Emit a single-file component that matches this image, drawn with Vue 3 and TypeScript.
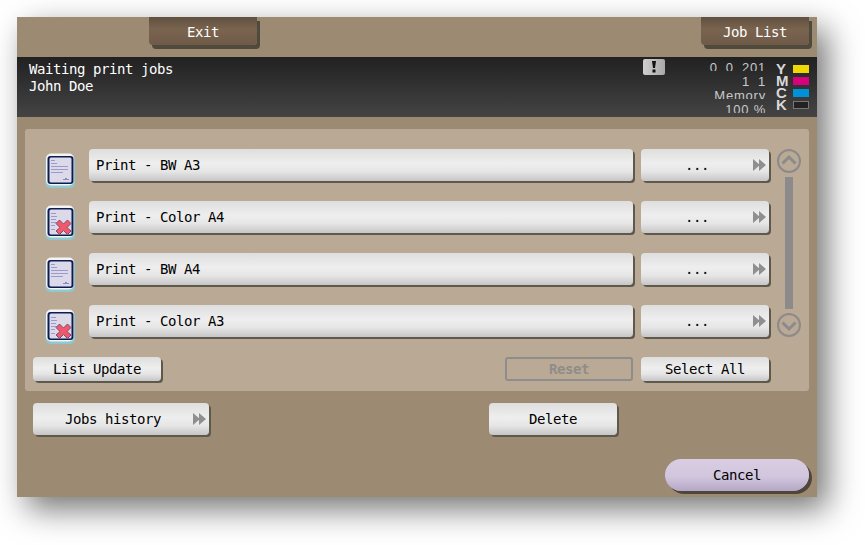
<script setup lang="ts">
interface Job { name: string; failed: boolean }
const jobs: Job[] = [
  { name: 'Print - BW A3', failed: false },
  { name: 'Print - Color A4', failed: true },
  { name: 'Print - BW A4', failed: false },
  { name: 'Print - Color A3', failed: true },
]
const inks = [
  { letter: 'Y', cls: 'ink-y' },
  { letter: 'M', cls: 'ink-m' },
  { letter: 'C', cls: 'ink-c' },
  { letter: 'K', cls: 'ink-k' },
]
</script>

<template>
  <div class="page">
    <div class="screen">
      <div class="top">
        <button class="tab">Exit</button>
        <button class="tab">Job List</button>
      </div>

      <div class="status">
        <div class="message">Waiting print jobs<br />John Doe</div>
        <div class="alert">
          <svg width="22" height="16" viewBox="0 0 22 16">
            <path d="M9 2h4l-1 7h-2z M9.500 10.500h3v3h-3z" fill="#111" />
          </svg>
        </div>
        <div class="counters">
          <div class="cnt spaced">0 0 201</div>
          <div class="cnt spaced whole">1 1</div>
          <div class="cnt">Memory</div>
          <div class="cnt">100 %</div>
        </div>
        <div class="inks">
          <div v-for="ink in inks" :key="ink.letter" class="ink">
            <span class="ink-letter">{{ ink.letter }}</span>
            <span class="ink-bar" :class="ink.cls"></span>
          </div>
        </div>
      </div>

      <div class="panel">
        <div class="list-area">
          <div class="rows">
            <div v-for="job in jobs" :key="job.name" class="row">
              <svg class="doc" width="31" height="35" viewBox="0 0 31 35">
                <rect x="0.5" y="2" width="29.500" height="33" rx="5" fill="#8fc9cf" />
                <rect x="1" y="0.5" width="28" height="32" rx="5" fill="#f4f4f6" />
                <rect x="2.500" y="3" width="26" height="28" rx="3" fill="#0c1c50" />
                <rect x="4.500" y="4.500" width="22" height="25" rx="1.500" fill="#dcd9e8" />
                <g v-if="!job.failed" stroke="#9a98cf" stroke-width="1" fill="none">
                  <path d="M6 7.500h4 M6 10.500h6 M6 13.500h17 M6 16.500h17 M6 19.500h12" />
                  <path d="M18 26.500h6 M20 25.500h2" stroke="#8d8bbd" />
                </g>
                <g v-else>
                  <path d="M6 8.500h5 M6 11.500h6 M6 14.500h5 M6 17.500h6 M6 20.500h4 M6 24.500h4" stroke="#9a98cf" stroke-width="1" fill="none" />
                  <path d="M11 18.500l3.500-3.500 4 4 4-4 3.500 3.500-4 4 4 3.500-3.500 3.500-4-4-4 4-3.500-3.500 4-3.500z" fill="#f2576b" stroke="#7a4f6a" stroke-width="1" />
                </g>
              </svg>
              <button class="btn main">{{ job.name }}</button>
              <button class="btn more">
                <span class="label">...</span>
                <svg class="arrows" width="14" height="12" viewBox="0 0 14 12">
                  <path d="M0 0l7 6-7 6z M6 0l7 6-7 6z" fill="#8f8f91" />
                </svg>
              </button>
            </div>
          </div>
          <div class="scroll">
            <svg width="24" height="24" viewBox="0 0 24 24">
              <circle cx="12" cy="12" r="11" fill="none" stroke="#8c8a8a" stroke-width="2" />
              <path d="M5.500 14.500L12 8l6.500 6.500" fill="none" stroke="#8c8a8a" stroke-width="3" />
            </svg>
            <div class="track"></div>
            <svg width="24" height="24" viewBox="0 0 24 24">
              <circle cx="12" cy="12" r="11" fill="none" stroke="#8c8a8a" stroke-width="2" />
              <path d="M5.500 9.500L12 16l6.500-6.500" fill="none" stroke="#8c8a8a" stroke-width="3" />
            </svg>
          </div>
        </div>
        <div class="panel-foot">
          <button class="btn small">List Update</button>
          <button class="small disabled">Reset</button>
          <button class="btn small">Select All</button>
        </div>
      </div>

      <div class="actions">
        <button class="btn history">
          <span class="label">Jobs history</span>
          <svg class="arrows" width="14" height="12" viewBox="0 0 14 12">
            <path d="M0 0l7 6-7 6z M6 0l7 6-7 6z" fill="#8f8f91" />
          </svg>
        </button>
        <button class="btn delete">Delete</button>
      </div>

      <div class="cancel-row">
        <button class="cancel">Cancel</button>
      </div>
    </div>
  </div>
</template>

<style>
html, body { background: #fff; margin: 0; }
</style>

<style scoped>
.page {
  width: 865px;
  height: 545px;
  box-sizing: border-box;
  padding: 17px 0 0 17px;
  overflow: hidden;
}
.screen {
  width: 800px;
  height: 480px;
  background: #9c8a72;
  box-shadow: 10px 12px 30px rgba(0, 0, 0, 0.55);
  font: 14px/17px "DejaVu Sans Mono", monospace;
  letter-spacing: -0.43px;
  color: #000;
}
button {
  font: inherit;
  letter-spacing: inherit;
  color: inherit;
  border: 0;
  padding: 0;
  margin: 0;
}
.top {
  height: 40px;
  display: flex;
  justify-content: space-between;
  padding: 0 8px 0 132px;
  box-sizing: border-box;
}
.tab {
  width: 108px;
  height: 28px;
  padding-top: 2px;
  border-radius: 0 0 4px 4px;
  background: linear-gradient(#60503f, #7a6450 45%, #6f5a48);
  box-shadow: 3px 4px 0 #4f4a3c;
  color: #fff;
}
.status {
  height: 60px;
  display: flex;
  background: linear-gradient(#212121, #444);
  color: #fff;
  padding-left: 12px;
}
.message { padding-top: 4px; width: 614px; }
.alert {
  width: 22px;
  height: 16px;
  margin-top: 2px;
  border-radius: 2px;
  background: linear-gradient(90deg, #cfcfcf, #a9a9a9);
}
.counters {
  width: 101px;
  padding-top: 5px;
  text-align: right;
  color: #c9c9c9;
  font: 13px/11px "Liberation Sans", sans-serif;
  letter-spacing: 0.8px;
}
.cnt { height: 9px; margin-bottom: 5px; overflow: hidden; }
.spaced { word-spacing: 3.6px; }
.whole { height: 10px; margin-bottom: 4px; }
.inks {
  margin-left: 10px;
  padding-top: 6px;
  width: 33px;
}
.ink {
  height: 12px;
  display: flex;
  align-items: center;
  justify-content: space-between;
}
.ink-letter {
  width: 10px;
  font: bold 15px/12px "Liberation Sans", sans-serif;
  letter-spacing: 0;
  color: #d8d8d8;
  text-align: center;
}
.ink-bar { width: 16px; height: 8px; }
.ink-y { background: #f0d800; }
.ink-m { background: #d8007f; }
.ink-c { background: #0091d8; }
.ink-k { background: #222; box-shadow: inset 0 0 0 1px #777; }

.panel {
  margin: 12px 8px 0;
  height: 262px;
  box-sizing: border-box;
  padding: 20px 8px 10px;
  background: #baa994;
  border-radius: 3px;
}
.list-area { display: flex; gap: 8px; }
.rows { display: flex; flex-direction: column; gap: 20px; width: 736px; }
.row { display: flex; align-items: flex-start; height: 32px; }
.doc { margin: 4px 13px 0 12px; flex: none; }
.btn {
  background: linear-gradient(#dedede, #eeeeee 45%, #e6e6e6 70%, #c6c6c6);
  border-radius: 4px;
  box-shadow: 2px 2px 0 #5f594d;
  display: flex;
  align-items: center;
  justify-content: center;
}
.main {
  width: 544px;
  height: 32px;
  justify-content: flex-start;
  padding-left: 7px;
  box-sizing: border-box;
  margin-right: 8px;
}
.more { width: 128px; height: 32px; padding-right: 2px; box-sizing: border-box; }
.label { flex: 1; text-align: center; }
.arrows { flex: none; }
.scroll {
  width: 24px;
  height: 188px;
  display: flex;
  flex-direction: column;
  align-items: center;
  gap: 4px;
}
.track { flex: 1; width: 8px; background: #8c8a8a; }
.panel-foot {
  display: flex;
  margin-top: 20px;
  padding-right: 32px;
}
.small { width: 128px; height: 24px; }
.panel-foot .small:nth-child(2) { margin-left: auto; margin-right: 8px; }
.disabled {
  box-sizing: border-box;
  background: transparent;
  border: 2px solid #8f8d8b;
  border-radius: 3px;
  color: #8f8d8b;
  font-weight: bold;
}
.actions {
  display: flex;
  margin-top: 12px;
  padding-left: 16px;
}
.history { width: 176px; height: 32px; padding-right: 2px; box-sizing: border-box; }
.delete { width: 128px; height: 32px; margin-left: 280px; }
.cancel-row {
  display: flex;
  justify-content: flex-end;
  margin-top: 24px;
  padding-right: 8px;
}
.cancel {
  width: 144px;
  height: 32px;
  border-radius: 16px;
  background: linear-gradient(#d9cde3, #d2c6de 55%, #b5a7c5);
  box-shadow: 3px 3px 0 #4c473a;
}
</style>
